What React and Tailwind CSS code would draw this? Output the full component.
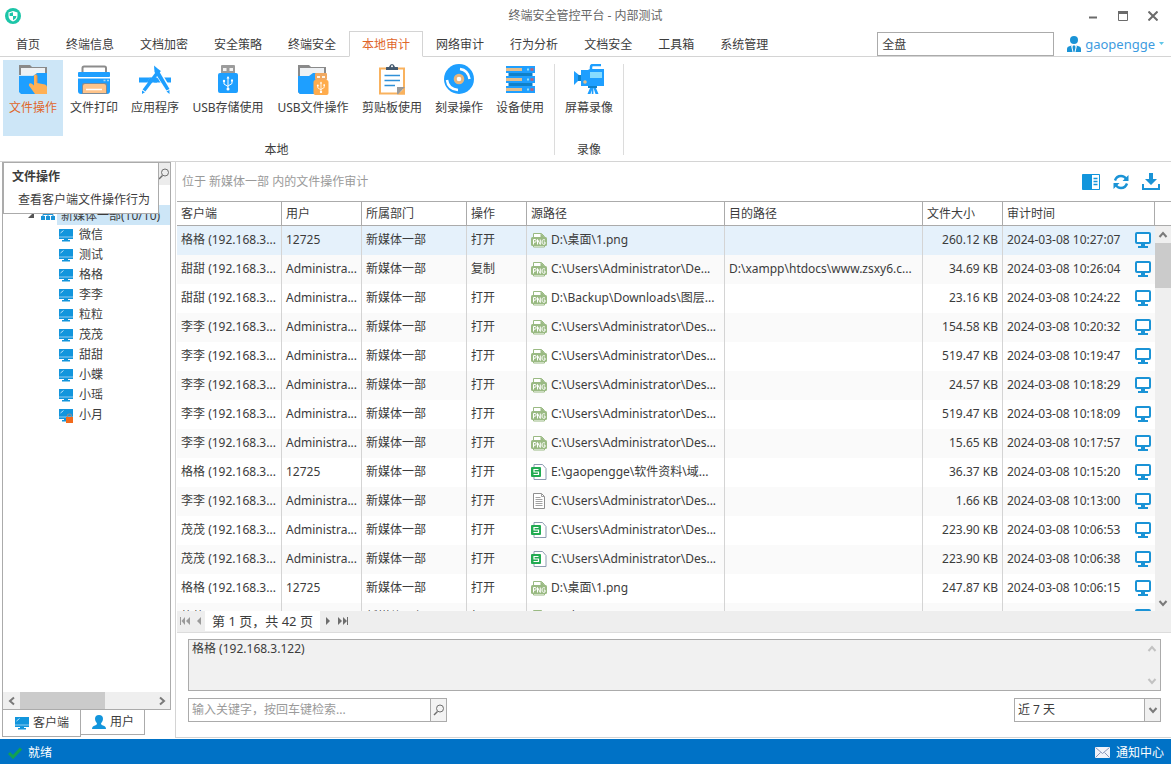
import React, { useState } from "react";
import clsx from "clsx";

const tabs = [
  "首页",
  "终端信息",
  "文档加密",
  "安全策略",
  "终端安全",
  "本地审计",
  "网络审计",
  "行为分析",
  "文档安全",
  "工具箱",
  "系统管理",
];

const clients = ["微信", "测试", "格格", "李李", "粒粒", "茂茂", "甜甜", "小蝶", "小瑶", "小月"];

const DES = "C:\\Users\\Administrator\\Des...";

const records = [
  { client: "格格", user: "12725", op: "打开", type: "png", src: "D:\\桌面\\1.png", dest: "", size: "260.12 KB", time: "10:27:07" },
  { client: "甜甜", user: "Administra...", op: "复制", type: "png", src: "C:\\Users\\Administrator\\De...", dest: "D:\\xampp\\htdocs\\www.zsxy6.c...", size: "34.69 KB", time: "10:26:04" },
  { client: "甜甜", user: "Administra...", op: "打开", type: "png", src: "D:\\Backup\\Downloads\\图层...", dest: "", size: "23.16 KB", time: "10:24:22" },
  { client: "李李", user: "Administra...", op: "打开", type: "png", src: DES, dest: "", size: "154.58 KB", time: "10:20:32" },
  { client: "李李", user: "Administra...", op: "打开", type: "png", src: DES, dest: "", size: "519.47 KB", time: "10:19:47" },
  { client: "李李", user: "Administra...", op: "打开", type: "png", src: DES, dest: "", size: "24.57 KB", time: "10:18:29" },
  { client: "李李", user: "Administra...", op: "打开", type: "png", src: DES, dest: "", size: "519.47 KB", time: "10:18:09" },
  { client: "李李", user: "Administra...", op: "打开", type: "png", src: DES, dest: "", size: "15.65 KB", time: "10:17:57" },
  { client: "格格", user: "12725", op: "打开", type: "sheet", src: "E:\\gaopengge\\软件资料\\域...", dest: "", size: "36.37 KB", time: "10:15:20" },
  { client: "李李", user: "Administra...", op: "打开", type: "txt", src: DES, dest: "", size: "1.66 KB", time: "10:13:00" },
  { client: "茂茂", user: "Administra...", op: "打开", type: "sheet", src: DES, dest: "", size: "223.90 KB", time: "10:06:53" },
  { client: "茂茂", user: "Administra...", op: "打开", type: "sheet", src: DES, dest: "", size: "223.90 KB", time: "10:06:38" },
  { client: "格格", user: "12725", op: "打开", type: "png", src: "D:\\桌面\\1.png", dest: "", size: "247.87 KB", time: "10:06:15" },
  { client: "格格", user: "12725", op: "打开", type: "png", src: "D:\\桌面\\1.png", dest: "", size: "247.87 KB", time: "10:06:02" },
];

/* ---------- ribbon icons (32 x 32) ---------- */

const FolderBase = () => (
  <>
    <path d="M2 1h11l2 2h15v8H2z" fill="#8a8a8a" />
    <path d="M4 4h24v7H4z" fill="#eef1f4" />
    <path d="M2 12h14l4-3h10v21H4l-2-2z" fill="#1e9fff" />
  </>
);

const Trident = ({ x, y, s = 1 }) => (
  <g transform={`translate(${x} ${y}) scale(${s})`} stroke="#fff" fill="#fff">
    <path d="M0-6V5M-4-2.500v3L0 3M4-2.500v2.500L0 2.500" fill="none" strokeWidth="1" />
    <path d="M-1.500-5L0-7.500L1.500-5z" stroke="none" />
    <circle cx="0" cy="5.500" r="1.500" stroke="none" />
    <circle cx="-4" cy="-2.500" r="1.200" stroke="none" />
    <rect x="3" y="-4" width="2" height="2" stroke="none" />
  </g>
);

const RibbonIcon = ({ name }) => (
  <svg viewBox="0 0 32 32" className="size-8 shrink-0" aria-hidden="true">
    {name === "file" && (
      <>
        <FolderBase />
        <path d="M17 11.500q1.500-2 3 0V19l8 1.500q2 .5 2 2.500v7H18l-5-7q-2-2-.5-3.500 1.500-1 4.500 2z" fill="#ffb055" />
        <path d="M19 11.500q.5-.8 1 0V19" fill="none" stroke="#ed8f45" strokeWidth="1" />
      </>
    )}
    {name === "print" && (
      <>
        <path d="M4.500 9V4q0-1.500 1.500-1.500h20.500q1.500 0 1.500 1.500v5" fill="#fff" stroke="#8c8c8c" strokeWidth="2" />
        <rect x="0" y="8" width="32" height="5" rx="1" fill="#1e9fff" />
        <path d="M0 14.500h32V27q0 3-3 3H3q-3 0-3-3z" fill="#1e9fff" />
        <path d="M4 30V21q0-2 2-2h21q2 0 2 2v9z" fill="#7e8b96" />
        <path d="M5 29v-7q0-2 2-2h19q2 0 2 2v7z" fill="#ffc48a" />
        <path d="M8 25.500h16" stroke="#fff" strokeWidth="1.500" />
        <path d="M25.500 16.500h2M29 16.500h2" stroke="#a8d8f5" strokeWidth="1.500" />
      </>
    )}
    {name === "app" && (
      <>
        <path d="M0 13.500h32v5H0z" fill="#1e9fff" />
        <path d="M15 2l15 25" stroke="#fff" strokeWidth="6" />
        <path d="M20 7L5 27" stroke="#fff" strokeWidth="6" />
        <path d="M11 13.500h7v5H7.500z" fill="#1e9fff" />
        <path d="M20.500 6L5 26.500" stroke="#1e9fff" strokeWidth="3.500" />
        <path d="M15 1.500l3.500 3L30.500 25l-3 1.500L15.500 8z" fill="#1e9fff" />
        <path d="M3 26.500l3 1.800L3 30zM27.500 27.500l3-1.500V30z" fill="#1e9fff" />
      </>
    )}
    {name === "usb" && (
      <>
        <rect x="9" y="1" width="14" height="9" rx="1" fill="#9c9c9c" />
        <path d="M11 4h3.500v3H11zM17.500 4H21v3h-3.500z" fill="#f3f3f3" />
        <rect x="6" y="9" width="20" height="20" rx="2" fill="#1e9fff" />
        <Trident x={16} y={19.500} />
      </>
    )}
    {name === "usbfile" && (
      <>
        <path d="M1 1h11l2 2h15v27H3l-2-2z" fill="#8a8a8a" />
        <path d="M3 4h24v8H3z" fill="#eef1f4" />
        <path d="M1 12h11l4-3h11v21H3l-2-2z" fill="#1e9fff" />
        <rect x="18" y="9" width="12" height="7" rx="1" fill="#f0a860" />
        <path d="M20 12h3v2h-3zM25 12h3v2h-3z" fill="#fff3e3" />
        <rect x="16.500" y="16" width="15" height="15" rx="2" fill="#ffac4c" />
        <Trident x={24} y={23.500} s={0.800} />
      </>
    )}
    {name === "clip" && (
      <>
        <rect x="4" y="4.500" width="24" height="25" fill="#fff" stroke="#f9b25e" strokeWidth="2" />
        <path d="M10 6V3.500q0-.5.500-.5H13q1-3 3-3t3 3h2.500q.5 0 .5.500V6z" fill="#44596e" />
        <circle cx="16" cy="2.300" r="1" fill="#fff" />
        <path d="M8.500 11.500H24M8.500 16.500H24M8.500 21.500H19" stroke="#2e90d8" strokeWidth="1.500" />
        <path d="M21 30v-7h8l-7 7.500z" fill="#9a9a9a" />
        <path d="M22 30.500l7-7v7z" fill="#f9b25e" />
      </>
    )}
    {name === "disc" && (
      <>
        <circle cx="16" cy="15" r="15" fill="#1e9fff" />
        <path d="M17 5q8 1 9.500 10M4 16q1 9 11 10" fill="none" stroke="#fff" strokeWidth="2.500" />
        <circle cx="16" cy="15" r="3.800" fill="#fff" stroke="#e6b57c" strokeWidth="3" />
      </>
    )}
    {name === "server" && (
      <>
        <path d="M4.500 8h24v17h-24z" fill="#0f80c8" />
        <path d="M2 2h29v7H2zM2 12h29v7H2zM2 22h29v7H2z" fill="#1e9fff" />
        <path d="M2 4h16v3H2zM2 14h16v3H2zM2 24h16v3H2z" fill="#e3bd8b" />
        <path d="M23 5.500h2M23 15.500h2M23 25.500h2" stroke="#8fe0ff" strokeWidth="2" />
        <path d="M26.500 5.500h3M26.500 15.500h3M26.500 25.500h3" stroke="#c65a6c" strokeWidth="2.500" />
      </>
    )}
    {name === "camera" && (
      <>
        <path d="M18 6V3q0-2 2-2h8" fill="none" stroke="#1e9fff" strokeWidth="2.500" />
        <path d="M1 7l5 4v5l-5 5z" fill="#1e9fff" />
        <path d="M5 11h3v6H5z" fill="#0f80c8" />
        <path d="M8 6h7q1-1 3-1h13v17H8z" fill="#1e9fff" />
        <path d="M17 8h12v6H17z" fill="#86dcff" />
        <circle cx="12" cy="18" r="1.800" fill="#e6c08c" />
        <path d="M15 22h9v2h-9z" fill="#0f80c8" />
        <path d="M17 24h2.500l-2 6h-3zM18.800 24h1.600v6h-1.600zM20.500 24H23l2.500 6h-3z" fill="#1e9fff" />
      </>
    )}
  </svg>
);

/* ---------- small icons ---------- */

const ShieldLogo = () => (
  <svg viewBox="0 0 16 16" className="size-4" aria-hidden="true">
    <circle cx="8" cy="8" r="8" fill="#1cc5a8" />
    <path d="M8 3l4.500 1.500V8q0 3.500-4.500 5.500Q3.500 11.500 3.500 8V4.500z" fill="#fff" />
    <path d="M8 4.200V8H4.600V5.200zM8 8h3.400q0 2.700-3.400 4.200z" fill="#1cc5a8" />
  </svg>
);

const MonitorSolid = ({ locked }) => (
  <svg viewBox="0 0 16 15" className="h-[15px] w-4 shrink-0" aria-hidden="true">
    <path d="M1 1h14v10H1z" fill="#1295dc" />
    <path d="M1 9h14" stroke="#8fcdf0" strokeWidth="1" />
    <path d="M6 11h4v1h2v1.500H4V12h2z" fill="#1295dc" />
    <path d="M2.500 5L5.500 2.500" stroke="#bfe5fa" strokeWidth="1" />
    {locked && (
      <>
        <path d="M9.500 9.500V8q0-2 2-2t2 2v1.500" fill="none" stroke="#8a8f94" strokeWidth="1.200" />
        <path d="M8 9h7v6H8z" fill="#f26a1b" />
      </>
    )}
  </svg>
);

const MonitorOutline = () => (
  <svg viewBox="0 0 16 16" className="size-4" aria-hidden="true">
    <rect x="1" y="1" width="14" height="10" rx="1" fill="#fff" stroke="#1a93d6" strokeWidth="2" />
    <path d="M6 11h4v3h3v2H3v-2h3z" fill="#1a93d6" />
  </svg>
);

const OrgIcon = () => (
  <svg viewBox="0 0 16 12" className="h-3 w-4 shrink-0" aria-hidden="true">
    <path d="M6 0h4v4H6zM1 7h4v4H1zM6 7h4v4H6zM11 7h4v4h-4z" fill="#1a93d6" />
    <path d="M8 4v3M3 7V5.500h10V7" fill="none" stroke="#1a93d6" />
  </svg>
);

const PersonIcon = () => (
  <svg viewBox="0 0 16 16" className="size-4 shrink-0" aria-hidden="true">
    <path d="M8 1q4 0 4 4 0 2.500-2 4.500 0 1.500 2 2 3 .5 3 3.500H1q0-3 3-3.500 2-.5 2-2Q4 7.500 4 5q0-4 4-4z" fill="#1295dc" />
  </svg>
);

const AdminIcon = () => (
  <svg viewBox="0 0 14 16" className="h-4 w-3.5 shrink-0" aria-hidden="true">
    <circle cx="7" cy="4" r="4" fill="#1a93d6" />
    <path d="M0 16v-3q0-2.500 3-3l2-.5L7 15l2-5.500 2 .5q3 .5 3 3v3z" fill="#1a93d6" />
    <path d="M6 9.500h2l.5 6h-3z" fill="#1a93d6" />
    <path d="M4.500 9.500L6 16M9.500 9.500L8 16" stroke="#fff" strokeWidth="1" />
  </svg>
);

const SearchIcon = () => (
  <svg viewBox="0 0 12 12" className="size-3 shrink-0" fill="none" stroke="#6e6e6e" aria-hidden="true">
    <circle cx="7" cy="4.500" r="3.500" />
    <path d="M4.500 7.500L1 11" strokeWidth="1.500" />
  </svg>
);

const Chevron = ({ dir, faded }) => (
  <svg
    viewBox="0 0 10 10"
    className={clsx(
      "size-2.5 shrink-0",
      dir === "up" && "rotate-180",
      dir === "left" && "rotate-90",
      dir === "right" && "-rotate-90"
    )}
    aria-hidden="true"
  >
    <path d="M1.500 3L5 7l3.500-4" fill="none" stroke={faded ? "#c2c2c2" : "#7a7a7a"} strokeWidth="2" />
  </svg>
);

const FileIcon = ({ type }) => {
  if (type === "sheet") {
    return (
      <svg viewBox="0 0 16 16" className="size-4 shrink-0" aria-hidden="true">
        <path d="M3 .5h8.500l3.500 4v11H3z" fill="#fff" stroke="#8d9bb0" />
        <rect x="0" y="3" width="10" height="10" rx="1" fill="#22ab52" />
        <path d="M7.500 5.500H3V8h4.500v2.500H2.500" fill="none" stroke="#fff" strokeWidth="1.200" />
      </svg>
    );
  }
  if (type === "txt") {
    return (
      <svg viewBox="0 0 16 16" className="size-4 shrink-0" aria-hidden="true">
        <path d="M2.500.5h8l3 3v12h-11z" fill="#fff" stroke="#8f8f8f" />
        <path d="M10.500.5v3h3M4.500 4.500h5M4.500 6.500h7M4.500 8.500h7M4.500 10.500h7M4.500 12.500h7" fill="none" stroke="#a2a2a2" />
      </svg>
    );
  }
  return (
    <svg viewBox="0 0 16 16" className="size-4 shrink-0" aria-hidden="true">
      <path d="M2.500 6V1.500h8l3 3V6M2.500 13v2h11v-2" fill="#fff" stroke="#9aba83" />
      <path d="M9.500 1v4.500H14z" fill="#9aba83" />
      <rect x="0" y="5" width="16" height="9" rx="1.500" fill="#9aba83" />
      <path d="M2.500 12.500v-5h1.500q1.200 0 1.200 1.300T4 10.200H2.500M6.500 12.500v-5l2.800 5v-5M14 8q-3-1.200-3 2t3 2v-2h-1.200" fill="none" stroke="#fff" />
    </svg>
  );
};

const RibbonButton = ({ icon, label, active, wide }) => (
  <button
    type="button"
    className={clsx(
      "flex h-[76px] flex-col items-center gap-[3px] whitespace-nowrap px-1.5 pt-1",
      wide && "w-[84px]",
      active ? "bg-[#cde6f7] text-[#e0662a]" : "hover:bg-[#e6f2fb]"
    )}
  >
    <RibbonIcon name={icon} />
    <span>{label}</span>
  </button>
);

const TitleBar = () => (
  <header className="flex h-[31px] shrink-0 items-center pr-[3px] pl-[5px]">
    <div className="flex w-[88px]">
      <ShieldLogo />
    </div>
    <h1 className="flex-1 text-center text-[#666]">终端安全管控平台 - 内部测试</h1>
    <div className="flex">
      <button type="button" aria-label="最小化" className="flex w-[30px] justify-center">
        <svg viewBox="0 0 10 10" className="size-2.5"><path d="M1 6.500h8" stroke="#6b6b6b" strokeWidth="2" /></svg>
      </button>
      <button type="button" aria-label="最大化" className="flex w-[30px] justify-center">
        <svg viewBox="0 0 10 10" className="size-2.5">
          <path d="M.5.500h9v9h-9z" fill="none" stroke="#6b6b6b" />
          <path d="M0 1.500h10" stroke="#6b6b6b" strokeWidth="3" />
        </svg>
      </button>
      <button type="button" aria-label="关闭" className="flex w-[30px] justify-center">
        <svg viewBox="0 0 10 10" className="size-2.5"><path d="M.5.500l9 9M9.500.500l-9 9" stroke="#6b6b6b" strokeWidth="2" /></svg>
      </button>
    </div>
  </header>
);

const TabBar = ({ current, onChange }) => (
  <nav className="flex h-[26px] shrink-0">
    <div className="w-[3px] border-b border-[#d4d4d4]" />
    {tabs.map((tab) => (
      <button
        key={tab}
        type="button"
        onClick={() => onChange(tab)}
        className={clsx(
          "whitespace-nowrap",
          tab === current
            ? "border border-[#d4d4d4] border-b-white px-3 pt-px text-[#e0662a]"
            : "border-b border-[#d4d4d4] px-[13px] pt-0.5"
        )}
      >
        {tab}
      </button>
    ))}
    <div className="flex flex-1 items-center justify-end border-b border-[#d4d4d4] pr-[7px]">
      <input
        type="text"
        aria-label="范围"
        defaultValue="全盘"
        className="h-6 w-[177px] border border-[#ababab] bg-white px-1 outline-none"
      />
      <button type="button" className="ml-[13px] flex items-center gap-1 text-[13px] text-[#3d9be0]">
        <AdminIcon />
        gaopengge
        <svg viewBox="0 0 5 4" className="h-1 w-[5px]" aria-hidden="true"><path d="M0 0h5L2.500 3z" fill="#5fc6e8" /></svg>
      </button>
    </div>
  </nav>
);

const Ribbon = () => (
  <section className="flex h-[105px] shrink-0 border-b border-[#d4d4d4] pt-[3px] pl-[3px]">
    <div className="flex flex-col">
      <div className="flex gap-px">
        <RibbonButton icon="file" label="文件操作" active />
        <RibbonButton icon="print" label="文件打印" />
        <RibbonButton icon="app" label="应用程序" />
        <RibbonButton icon="usb" label="USB存储使用" wide />
        <RibbonButton icon="usbfile" label="USB文件操作" wide />
        <RibbonButton icon="clip" label="剪贴板使用" />
        <RibbonButton icon="disc" label="刻录操作" />
        <RibbonButton icon="server" label="设备使用" />
      </div>
      <span className="pt-[5px] text-center">本地</span>
    </div>
    <div className="mx-1 mt-1 mb-1.5 w-px bg-[#dcdcdc]" />
    <div className="flex flex-col">
      <RibbonButton icon="camera" label="屏幕录像" />
      <span className="pt-[5px] text-center">录像</span>
    </div>
    <div className="mx-1 mt-1 mb-1.5 w-px bg-[#dcdcdc]" />
  </section>
);

const Sidebar = () => (
  <aside className="relative flex w-[171px] shrink-0 flex-col pl-0.5">
    <div className="flex min-h-0 flex-1 flex-col border border-[#ababab]">
      <div className="flex h-[22px] shrink-0">
        <input type="text" aria-label="搜索客户端" className="min-w-0 flex-1 outline-none" />
        <button type="button" aria-label="搜索" className="flex w-3 items-center justify-center bg-[#ececec]">
          <SearchIcon />
        </button>
      </div>
      <div className="min-h-0 flex-1 overflow-hidden pt-5">
        <div className="flex h-5 items-center">
          <svg viewBox="0 0 6 6" className="mr-1.5 ml-[25px] size-1.5" aria-hidden="true"><path d="M6 0v6H0z" fill="#555" /></svg>
          <OrgIcon />
          <span className="ml-px h-5 flex-1 whitespace-nowrap bg-[#cde6f7] pt-0.5 pl-1">新媒体一部(10/10)</span>
        </div>
        <ul>
          {clients.map((name, i) => (
            <li key={name} className="flex h-5 items-center gap-[5px] pl-[55px]">
              <MonitorSolid locked={i === clients.length - 1} />
              {name}
            </li>
          ))}
        </ul>
      </div>
      <div className="flex h-[17px] shrink-0 items-center bg-[#efefef]">
        <div className="flex w-[17px] justify-center"><Chevron dir="left" /></div>
        <div className="flex h-full flex-1">
          <div className="w-[85px] bg-[#cbcbcb]" />
        </div>
        <div className="flex w-[17px] justify-center"><Chevron dir="right" /></div>
      </div>
    </div>
    <div className="flex h-7 shrink-0 items-start">
      <button type="button" className="flex h-[27px] items-center gap-[3px] border border-t-0 border-[#ababab] px-[11px]">
        <MonitorSolid />
        <span>客户端</span>
      </button>
      <button type="button" className="flex h-[25px] items-center gap-[3px] border border-t-0 border-l-0 border-[#ababab] px-2.5">
        <PersonIcon />
        <span>用户</span>
      </button>
    </div>

    {/* hover tip of the active ribbon button */}
    <div
      role="tooltip"
      className="absolute top-0 left-[3px] h-[52px] w-[156px] border border-[#ababab] bg-white px-2 pt-1"
    >
      <p className="font-bold leading-5">文件操作</p>
      <p className="mt-[3px] whitespace-nowrap pl-1.5 leading-5">查看客户端文件操作行为</p>
    </div>
  </aside>
);

const Th = ({ children }) => (
  <th className="h-6 border-r border-b border-[#ababab] px-1 text-left font-normal">{children}</th>
);

const cell = "border-r border-[#d4d4d4] px-1 pb-0.5";

const AuditTable = () => (
  <div className="flex min-h-0 flex-1 border-t border-[#ababab]">
    <div className="min-w-0 flex-1 overflow-hidden">
      <table className="w-full table-fixed border-separate border-spacing-0 whitespace-nowrap">
        <colgroup>
          <col className="w-[105px]" />
          <col className="w-20" />
          <col className="w-[105px]" />
          <col className="w-[60px]" />
          <col />
          <col />
          <col className="w-20" />
          <col className="w-[152px]" />
        </colgroup>
        <thead>
          <tr>
            <Th>客户端</Th>
            <Th>用户</Th>
            <Th>所属部门</Th>
            <Th>操作</Th>
            <Th>源路径</Th>
            <Th>目的路径</Th>
            <Th>文件大小</Th>
            <Th>审计时间</Th>
          </tr>
        </thead>
        <tbody>
          {records.map((r, i) => (
            <tr
              key={i}
              className={clsx("h-[29px]", i === 0 ? "bg-[#e5f1fb]" : i % 2 === 1 ? "bg-[#fafafa]" : "bg-white")}
            >
              <td className={cell}>{r.client} (192.168.3...</td>
              <td className={cell}>{r.user}</td>
              <td className={cell}>新媒体一部</td>
              <td className={cell}>{r.op}</td>
              <td className={cell}>
                <div className="flex items-center gap-1">
                  <FileIcon type={r.type} />
                  <span>{r.src}</span>
                </div>
              </td>
              <td className={cell}>{r.dest}</td>
              <td className={clsx(cell, "text-right")}>{r.size}</td>
              <td className="px-1 pb-0.5">
                <div className="flex items-center justify-between">
                  <span>2024-03-08 {r.time}</span>
                  <button type="button" aria-label="查看屏幕">
                    <MonitorOutline />
                  </button>
                </div>
              </td>
            </tr>
          ))}
        </tbody>
      </table>
    </div>
    <div className="flex w-4 shrink-0 flex-col">
      <div className="h-6 shrink-0 border-b border-[#ababab]" />
      <div className="flex flex-1 flex-col items-center bg-[#efefef]">
        <div className="flex h-[17px] items-center"><Chevron dir="up" /></div>
        <div className="h-[45px] w-full bg-[#cbcbcb]" />
        <div className="flex-1" />
        <div className="flex h-[17px] items-center"><Chevron dir="down" /></div>
      </div>
    </div>
  </div>
);

const Pager = () => (
  <div className="flex h-[22px] shrink-0 items-start border-b border-[#dcdcdc] bg-[#eee]">
    <button type="button" aria-label="首页" className="flex h-5 w-[15px] items-center justify-center">
      <svg viewBox="0 0 10 8" className="h-2 w-2.5" fill="#9a9a9a"><path d="M0 0h1v8H0zM5 0v8L1.500 4zM10 0v8L6 4z" /></svg>
    </button>
    <button type="button" aria-label="上一页" className="flex h-5 w-[13px] items-center justify-center">
      <svg viewBox="0 0 4 8" className="h-2 w-1" fill="#9a9a9a"><path d="M4 0v8L0 4z" /></svg>
    </button>
    <span className="h-5 w-[115px] bg-white text-center text-[13px] leading-5">第 1 页，共 42 页</span>
    <button type="button" aria-label="下一页" className="flex h-5 w-[15px] items-center justify-center">
      <svg viewBox="0 0 4 8" className="h-2 w-1" fill="#6e6e6e"><path d="M0 0v8l4-4z" /></svg>
    </button>
    <button type="button" aria-label="末页" className="flex h-5 w-[15px] items-center justify-center">
      <svg viewBox="0 0 10 8" className="h-2 w-2.5" fill="#6e6e6e"><path d="M9 0h1v8H9zM0 0v8l4-4zM5 0v8l4-4z" /></svg>
    </button>
  </div>
);

const DetailPane = () => (
  <div className="shrink-0 pt-1.5 pr-2.5 pb-[15px] pl-[11px]">
    <div className="flex border border-[#ababab] bg-[#f1f1f1]">
      <textarea
        readOnly
        aria-label="客户端详情"
        value="格格 (192.168.3.122)"
        className="h-[50px] flex-1 resize-none overflow-hidden px-[3px] leading-[18px] outline-none"
      />
      <div className="flex w-[17px] flex-col items-center justify-between py-1">
        <Chevron dir="up" faded />
        <Chevron dir="down" faded />
      </div>
    </div>
    <div className="mt-[7px] flex justify-between">
      <div className="flex h-6 w-[259px] border border-[#ababab]">
        <input
          type="text"
          aria-label="检索"
          placeholder="输入关键字，按回车键检索..."
          className="min-w-0 flex-1 px-[3px] outline-none placeholder:text-[#9a9a9a]"
        />
        <button type="button" aria-label="检索" className="flex w-4 items-center justify-center border-l border-[#ababab] bg-[#f3f3f3]">
          <SearchIcon />
        </button>
      </div>
      <div className="relative flex h-6 w-[147px] border border-[#ababab]">
        <select aria-label="时间范围" defaultValue="7" className="w-full appearance-none px-[3px] outline-none">
          <option value="7">近 7 天</option>
          <option value="30">近 30 天</option>
        </select>
        <div className="pointer-events-none absolute inset-y-0 right-0 flex w-4 items-center justify-center border-l border-[#ababab] bg-[#f0f0f0]">
          <Chevron dir="down" />
        </div>
      </div>
    </div>
  </div>
);

const Content = () => (
  <main className="ml-1 flex min-w-0 flex-1 flex-col border-b border-l border-[#d4d4d4] pl-px">
    <div className="flex h-[39px] shrink-0 items-center justify-between pr-[11px] pl-[5px]">
      <span className="text-[#9a9a9a]">位于 新媒体一部 内的文件操作审计</span>
      <div className="flex items-center gap-3">
        <button type="button" aria-label="列表视图">
          <svg viewBox="0 0 18 16" className="h-4 w-[18px]">
            <path d="M.5.500h17v15H.5z" fill="#1295dc" stroke="#1295dc" />
            <path d="M10 1h7v14h-7z" fill="#fff" />
            <path d="M11.500 4.500h4M11.500 7.500h4M11.500 10.500h4" stroke="#1295dc" strokeWidth="1.500" />
          </svg>
        </button>
        <button type="button" aria-label="刷新">
          <svg viewBox="0 0 18 16" className="h-4 w-[18px]" fill="none" stroke="#1a93d6" strokeWidth="2.400">
            <path d="M3 6.500Q4.500 2 9 2q3.500 0 5.200 3M15 9.500Q13.500 14 9 14q-3.500 0-5.200-3" />
            <path d="M16.500 1v6h-6zM1.500 15V9h6z" fill="#1a93d6" stroke="none" />
          </svg>
        </button>
        <button type="button" aria-label="导出">
          <svg viewBox="0 0 18 17" className="h-[17px] w-[18px]" fill="#1a93d6">
            <path d="M7 0h4v6h4l-6 6-6-6h4zM0 11h2v4h14v-4h2v6H0z" />
          </svg>
        </button>
      </div>
    </div>
    <AuditTable />
    <Pager />
    <DetailPane />
  </main>
);

const StatusBar = () => (
  <footer className="flex h-[25px] shrink-0 items-center justify-between bg-[#0072c6] pt-0.5 pr-[7px] pl-2 text-white">
    <div className="flex items-center gap-1.5">
      <svg viewBox="0 0 14 12" className="h-3 w-3.5" aria-hidden="true"><path d="M1 6l4 4 8-8.500" fill="none" stroke="#12a150" strokeWidth="3" /></svg>
      <span>就绪</span>
    </div>
    <button type="button" className="flex items-center gap-1.5">
      <svg viewBox="0 0 15 11" className="h-[11px] w-[15px]" aria-hidden="true">
        <path d="M0 0h15v11H0z" fill="#f1f3fa" />
        <path d="M.5.500l7 6 7-6M.5 10.500l5-5M14.500 10.500l-5-5" fill="none" stroke="#8a97b8" />
      </svg>
      <span>通知中心</span>
    </button>
  </footer>
);

export default function App() {
  const [currentTab, setCurrentTab] = useState("本地审计");

  return (
    <div className="flex h-screen flex-col overflow-hidden bg-white font-['Noto_Sans','Noto_Sans_CJK_SC',sans-serif] text-[12px] leading-[18px] text-[#3c3c3c]">
      <TitleBar />
      <TabBar current={currentTab} onChange={setCurrentTab} />
      <Ribbon />
      <div className="flex min-h-0 flex-1 pb-px">
        <Sidebar />
        <Content />
      </div>
      <StatusBar />
    </div>
  );
}
